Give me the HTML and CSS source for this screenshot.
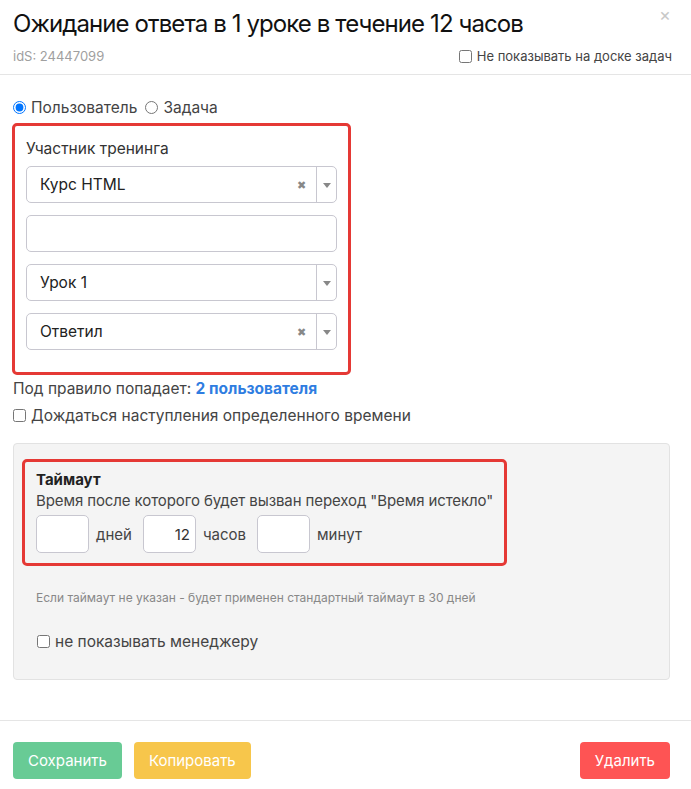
FILE: index.html
```html
<!DOCTYPE html>
<html lang="ru">
<head>
    <meta charset="UTF-8">
    <meta name="viewport" content="width=device-width, initial-scale=1.0">
    <title>Ожидание ответа</title>
    <link rel="stylesheet" href="styles.css">
</head>
<body>
    <div class="modal">
        <div class="modal-header">
            <h1>Ожидание ответа в 1 уроке в течение 12 часов</h1>
            <span class="close">&times;</span>
            <div class="header-row">
                <span class="ids">idS: 24447099</span>
                <label class="check small"><input type="checkbox"> Не показывать на доске задач</label>
            </div>
        </div>

        <div class="modal-body">
            <div class="radios">
                <label class="radio"><input type="radio" name="kind" checked> Пользователь</label>
                <label class="radio"><input type="radio" name="kind"> Задача</label>
            </div>

            <div class="red-box filters">
                <div class="label">Участник тренинга</div>
                <div class="select">
                    <span class="select-value">Курс HTML</span>
                    <span class="select-clear">&#x2716;</span>
                    <span class="select-arrow"></span>
                </div>
                <input type="text" class="text-input">
                <div class="select">
                    <span class="select-value">Урок 1</span>
                    <span class="select-arrow"></span>
                </div>
                <div class="select">
                    <span class="select-value">Ответил</span>
                    <span class="select-clear">&#x2716;</span>
                    <span class="select-arrow"></span>
                </div>
            </div>

            <p class="count">Под правило попадает: <a href="#">2 пользователя</a></p>
            <label class="check"><input type="checkbox"> Дождаться наступления определенного времени</label>

            <div class="panel">
                <div class="red-box timeout">
                    <div class="timeout-title">Таймаут</div>
                    <div class="timeout-desc">Время после которого будет вызван переход "Время истекло"</div>
                    <div class="timeout-row">
                        <input type="text" class="num-input"> <span>дней</span>
                        <input type="text" class="num-input" value="12"> <span>часов</span>
                        <input type="text" class="num-input"> <span>минут</span>
                    </div>
                </div>
                <p class="hint">Если таймаут не указан - будет применен стандартный таймаут в 30 дней</p>
                <label class="check"><input type="checkbox"> не показывать менеджеру</label>
            </div>
        </div>

        <div class="modal-footer">
            <button class="btn btn-green">Сохранить</button>
            <button class="btn btn-yellow">Копировать</button>
            <button class="btn btn-red">Удалить</button>
        </div>
    </div>
</body>
</html>
```

FILE: styles.css
```css
* {
    margin: 0;
    padding: 0;
    box-sizing: border-box;
    font-family: Inter, "Noto Sans", sans-serif;
}
body {
    background: #fff;
    color: #222;
    width: 691px;
}
.modal-header {
    position: relative;
    padding: 8px 13px 0 13px;
    border-bottom: 1px solid #e5e5e5;
    height: 75px;
}
h1 {
    font-size: 24px;
    font-weight: 400;
    line-height: 32px;
    color: #111;
    letter-spacing: -0.9px;
}
.close {
    position: absolute;
    right: 20px;
    top: 4px;
    font-size: 18px;
    color: #c8c8c8;
}
.header-row {
    display: flex;
    justify-content: space-between;
    align-items: center;
    margin-top: 8px;
    padding-right: 6px;
}
.ids {
    font-size: 13px;
    color: #a0a0a0;
}
.check {
    display: flex;
    align-items: center;
    gap: 5px;
    font-size: 15.5px;
    color: #444;
}
.check input {
    width: 13px;
    height: 13px;
    margin: 0;
}
.check.small {
    font-size: 13px;
    color: #444;
}
.modal-body {
    padding: 23px 21px 0 13px;
}
.radios {
    display: flex;
    gap: 8px;
    font-size: 15.5px;
    color: #444;
}
.radio {
    display: flex;
    align-items: center;
    gap: 5px;
}
.radio input {
    width: 13px;
    height: 13px;
    margin: 0;
}
.red-box {
    border: 3px solid #e53935;
    border-radius: 5px;
}
.filters {
    width: 339px;
    margin-top: 6px;
    margin-left: -1px;
    padding: 13px 11px 22px 11px;
    display: flex;
    flex-direction: column;
    gap: 12px;
}
.label {
    font-size: 15.5px;
    color: #333;
    margin-bottom: -4px;
}
.select, .text-input {
    height: 37px;
    border: 1px solid #c8c7d0;
    border-radius: 5px;
    background: #fff;
    width: 100%;
}
.select {
    display: flex;
    align-items: center;
    font-size: 15.5px;
    color: #222;
}
.select-value {
    flex: 1;
    padding-left: 13px;
}
.select-clear {
    font-size: 11px;
    color: #888;
    width: 30px;
    text-align: center;
}
.select-arrow {
    width: 20px;
    height: 100%;
    border-left: 1px solid #c8c7d0;
    position: relative;
}
.select-arrow::after {
    content: "";
    position: absolute;
    left: 6px;
    top: 16px;
    border-left: 4px solid transparent;
    border-right: 4px solid transparent;
    border-top: 5px solid #888;
}
.count {
    font-size: 15.5px;
    color: #444;
    margin-top: 4px;
}
.count a {
    color: #2f7de1;
    font-weight: 700;
    text-decoration: none;
}
.modal-body > .check {
    margin-top: 8px;
}
.panel {
    margin-top: 18px;
    background: #f4f4f4;
    border: 1px solid #e2e2e2;
    border-radius: 4px;
    height: 237px;
    padding: 15px 8px 0 8px;
}
.timeout {
    width: 485px;
    padding: 8px 11px 10px 11px;
    white-space: nowrap;
}
.timeout-title {
    font-size: 15px;
    font-weight: 700;
    color: #222;
}
.timeout-desc {
    font-size: 15px;
    color: #444;
    margin-top: 2px;
    letter-spacing: -0.1px;
}
.timeout-row {
    display: flex;
    align-items: center;
    gap: 7px;
    margin-top: 5px;
    font-size: 15px;
    color: #444;
}
.timeout-row span {
    margin-right: 4px;
}
.num-input {
    width: 53px;
    height: 38px;
    border: 1px solid #c8c7d0;
    border-radius: 5px;
    background: #fff;
    font-size: 15px;
    text-align: right;
    padding-right: 5px;
    color: #333;
}
.hint {
    font-size: 12px;
    color: #888;
    margin-top: 24px;
    padding-left: 14px;
}
.panel > .check {
    margin-top: 27px;
    padding-left: 15px;
}
.modal-footer {
    margin-top: 40px;
    border-top: 1px solid #e5e5e5;
    padding: 21px 21px 0 13px;
    display: flex;
    gap: 12px;
}
.btn {
    height: 37px;
    border: none;
    border-radius: 4px;
    color: #fff;
    font-size: 15px;
    padding: 0 15px;
    cursor: pointer;
}
.btn-green {
    background: #68cb95;
}
.btn-yellow {
    background: #f7c64b;
}
.btn-red {
    background: #fe5454;
    margin-left: auto;
}
```
